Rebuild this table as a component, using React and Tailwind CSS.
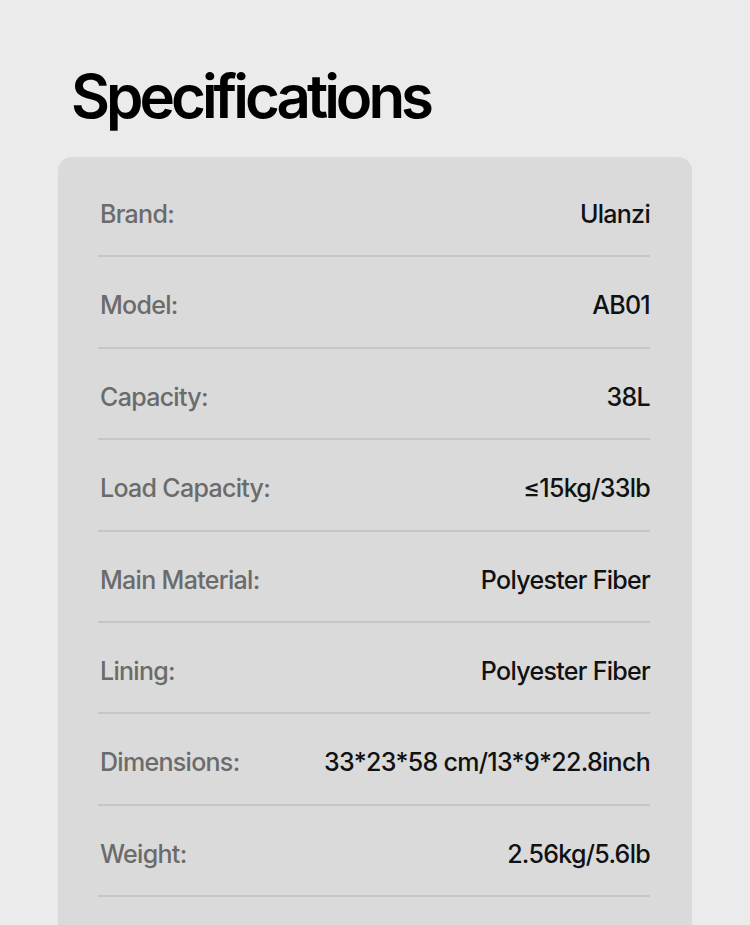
const specs = [
  ['Brand:', 'Ulanzi'],
  ['Model:', 'AB01'],
  ['Capacity:', '38L'],
  ['Load Capacity:', '≤15kg/33lb'],
  ['Main Material:', 'Polyester Fiber'],
  ['Lining:', 'Polyester Fiber'],
  ['Dimensions:', '33*23*58 cm/13*9*22.8inch'],
  ['Weight:', '2.56kg/5.6lb'],
];

export default function App() {
  return (
    <div className="min-h-[925px] bg-[#ebebeb] overflow-hidden font-['Inter',sans-serif]">
      <h1 className="pl-[71px] pt-[60px] h-[157px] text-[60px] leading-[72px] font-semibold tracking-[-4px] text-black">
        Specifications
      </h1>
      <div className="ml-[58px] w-[634px] h-[800px] rounded-[14px] bg-[#dadada] pl-[40px] pr-[42px] pt-[9px]">
        {specs.map(([label, value]) => (
          <div
            key={label}
            className="h-[91.4px] flex items-center justify-between border-b-2 border-[#c6c6c6] pt-[8px] text-[25px] font-medium tracking-[-0.7px]"
          >
            <span className="pl-[2px] text-[#6b6b6b]">{label}</span>
            <span className="text-[#111]">{value}</span>
          </div>
        ))}
      </div>
    </div>
  );
}
